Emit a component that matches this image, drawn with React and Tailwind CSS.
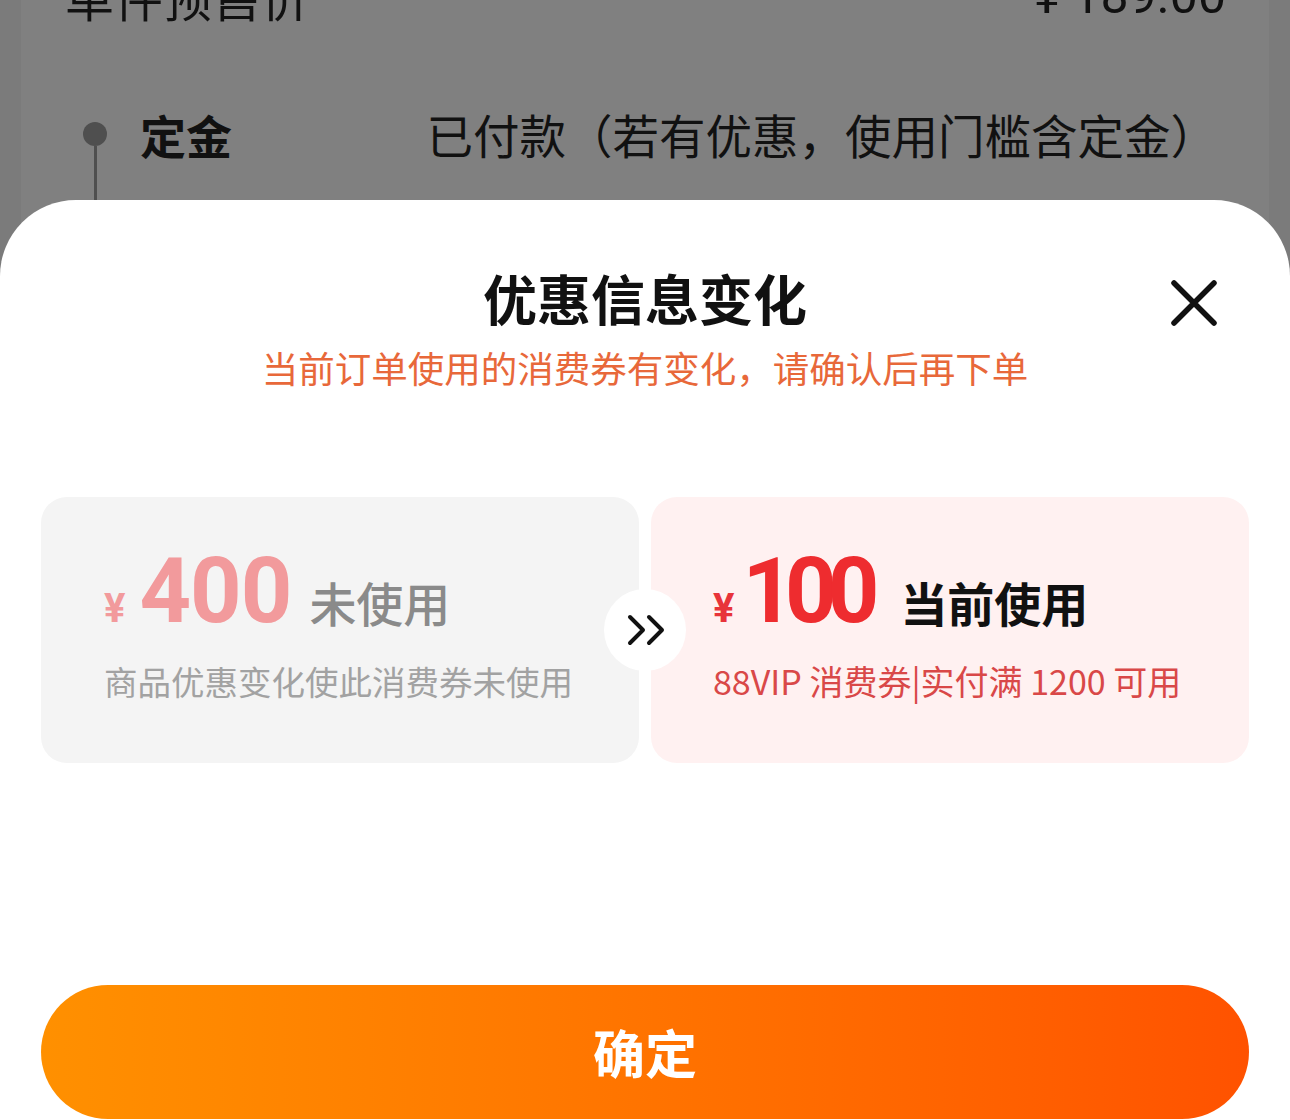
const cjk = { fontFamily: '"Noto Sans CJK SC", "Noto Sans", sans-serif' };
const num = { fontFamily: 'Roboto, "Noto Sans CJK SC", sans-serif' };

function CloseIcon() {
  return (
    <svg width="48" height="48" viewBox="0 0 48 48" fill="none">
      <path d="M4 4L44 44M44 4L4 44" stroke="#111" strokeWidth="5.5" strokeLinecap="round" />
    </svg>
  );
}

function Chevrons() {
  return (
    <svg width="44" height="32" viewBox="0 0 44 32" fill="none">
      <path d="M5 3L18 16L5 29M24 3L37 16L24 29" stroke="#111" strokeWidth="4" strokeLinecap="round" strokeLinejoin="round" />
    </svg>
  );
}

function Coupon({ tone, amount, label, note }) {
  const used = tone === "used";
  return (
    <div
      className={
        used
          ? "h-[266px] rounded-[26px] bg-[#fff1f1] pl-[62px] pt-[50px]"
          : "h-[266px] rounded-[26px] bg-[#f4f4f4] pl-[63px] pt-[50px]"
      }
    >
      <div className="flex items-baseline h-[90px]">
        <span
          className={used ? "text-[40px] font-bold text-[#e8343a] leading-[90px]" : "text-[40px] font-bold text-[#f29a9c] leading-[90px]"}
          style={num}
        >
          ¥
        </span>
        <span
          className={
            used
              ? "ml-[8px] text-[90px] font-bold text-[#ee2c2f] leading-[90px] tracking-[-9px]"
              : "ml-[14px] text-[90px] font-bold text-[#f29a9c] leading-[90px] tracking-[-1px]"
          }
          style={num}
        >
          {amount}
        </span>
        <span
          className={
            used
              ? "ml-[30px] text-[47px] font-bold text-[#111] leading-[90px]"
              : "ml-[18px] text-[47px] font-medium text-[#8a8a8a] leading-[90px]"
          }
          style={cjk}
        >
          {label}
        </span>
      </div>
      <div
        className={used ? "mt-[22px] text-[34px] leading-[44px] text-[#d94848]" : "mt-[22px] text-[33.5px] leading-[44px] text-[#a2a2a2]"}
        style={cjk}
      >
        {note}
      </div>
    </div>
  );
}

export default function App() {
  return (
    <div className="relative w-[1290px] h-[1120px] overflow-hidden bg-[#7b7b7b]" style={cjk}>
      {/* dimmed page behind the sheet */}
      <div className="mx-[21px] h-full bg-[#808080] text-[#111]">
        <div className="flex justify-between pl-[44px] pr-[43px] mt-[-34px]">
          <span className="text-[49px] leading-[60px]">单件预售价</span>
          <span className="text-[50px] leading-[60px]" style={num}>¥ 189.00</span>
        </div>
        <div className="flex items-start pl-[62px] pr-[52px] mt-[78px]">
          <div className="flex flex-col items-center w-[24px] pt-[18px]">
            <div className="w-[24px] h-[24px] rounded-full bg-[#4f4f4f]" />
            <div className="w-[3px] h-[56px] bg-[#4f4f4f]" />
          </div>
          <span className="ml-[33px] text-[46px] font-bold leading-[60px]">定金</span>
          <span className="ml-auto text-[46.5px] leading-[60px]">已付款（若有优惠，使用门槛含定金）</span>
        </div>
      </div>

      {/* bottom sheet */}
      <div className="absolute left-0 right-0 top-[200px] bottom-0 bg-white rounded-t-[76px] px-[41px] pt-[64px] flex flex-col">
        <div className="absolute top-[79px] right-[72px]">
          <CloseIcon />
        </div>
        <h2 className="text-center text-[54px] leading-[68px] font-bold text-[#111]">优惠信息变化</h2>
        <p className="mt-[14px] text-center text-[36.5px] leading-[44px] text-[#e8683a]">
          当前订单使用的消费券有变化，请确认后再下单
        </p>

        <div className="relative mt-[107px] grid grid-cols-2 gap-[12px]">
          <Coupon tone="unused" amount="400" label="未使用" note="商品优惠变化使此消费券未使用" />
          <Coupon tone="used" amount="100" label="当前使用" note="88VIP 消费券|实付满 1200 可用" />
          <div className="absolute left-1/2 top-1/2 -translate-x-1/2 -translate-y-1/2 w-[82px] h-[82px] rounded-full bg-white flex items-center justify-center pl-[3px]">
            <Chevrons />
          </div>
        </div>

        <button className="mt-[222px] h-[134px] w-full rounded-full bg-gradient-to-r from-[#ff9000] to-[#ff5200] text-white text-[52px] font-bold">
          确定
        </button>
      </div>
    </div>
  );
}
